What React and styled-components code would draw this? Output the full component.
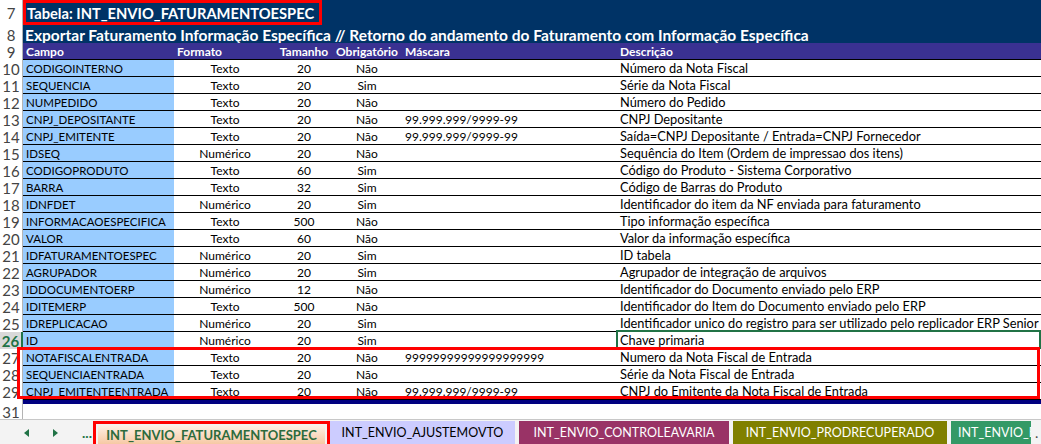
import React from "react";
import styled, { createGlobalStyle } from "styled-components";

const GlobalStyle = createGlobalStyle`
  body {
    margin: 0;
    background: #fff;
    font-family: Lato, "Open Sans", sans-serif;
  }
`;

const COLS = "23px 151px 102px 56px 70px 215px 1fr";

const Sheet = styled.div`
  width: 1041px;
  height: 444px;
  overflow: hidden;
  display: flex;
  flex-direction: column;
  background: #fff;
`;

const Row = styled.div`
  display: grid;
  grid-template-columns: ${COLS};
  height: ${({ h }) => h}px;
  flex: none;
`;

const RowHead = styled.div`
  display: flex;
  align-items: center;
  justify-content: center;
  font-size: 15px;
  overflow: hidden;
  color: ${({ sel }) => (sel ? "#217346" : "#444")};
  font-weight: ${({ sel }) => (sel ? 700 : 400)};
  background: ${({ sel }) => (sel ? "#d9d9d9" : "#fff")};
  border-right: ${({ sel }) => (sel ? "2px solid #217346" : "1px solid #b4b4b4")};
`;

const TitleCell = styled.div`
  grid-column: 2 / -1;
  background: #003366;
  color: #fff;
  font-weight: 700;
  font-size: ${({ size }) => size}px;
  display: flex;
  align-items: center;
  white-space: nowrap;
  padding-left: ${({ pad }) => pad || 0}px;
`;

const TitleBox = styled.span`
  box-sizing: border-box;
  width: 299px;
  height: 25px;
  border: 3px solid #ff0000;
  display: flex;
  align-items: center;
  padding-left: 1px;
  align-self: flex-start;
`;

const HeadCell = styled.div`
  background: #3a3192;
  color: #fff;
  font-weight: 700;
  font-size: 12px;
  white-space: nowrap;
  padding: 0 3px;
  display: flex;
  align-items: center;
  justify-content: ${({ center }) => (center ? "center" : "flex-start")};
  border-bottom: 1px solid #000;
  box-sizing: border-box;
`;

const Cell = styled.div`
  position: relative;
  box-sizing: border-box;
  font-size: ${({ size }) => size || 12}px;
  color: #000;
  white-space: nowrap;
  padding: 0 3px;
  display: flex;
  align-items: center;
  justify-content: ${({ center }) => (center ? "center" : "flex-start")};
  background: ${({ blue }) => (blue ? "#99ccff" : "#fff")};
  border-bottom: 1px solid #000;
`;

const Selection = styled.div`
  position: absolute;
  left: -1px;
  right: 0;
  top: -2px;
  bottom: -1px;
  border: 2px solid #217346;
  pointer-events: none;
`;

const Marked = styled.div`
  position: relative;
  flex: none;
  &::after {
    content: "";
    position: absolute;
    left: 17px;
    right: 1px;
    top: -2px;
    bottom: 1px;
    border: 3px solid #ff0000;
    pointer-events: none;
  }
`;

const Band = styled.div`
  grid-column: 2 / -1;
  background: #000080;
`;

const Empty = styled.div`
  grid-column: 2 / -1;
`;

const TabBar = styled.div`
  flex: 1;
  display: flex;
  align-items: stretch;
  background: #f3f3f3;
  border-top: 1px solid #c8c8c8;
  padding-top: 1px;
`;

const Nav = styled.div`
  width: 93px;
  flex: none;
  display: flex;
  align-items: center;
  padding-left: 24px;
  box-sizing: border-box;
  gap: 24px;
  color: #217346;
  font-weight: 700;
  font-size: 14px;
`;

const ActiveFrame = styled.div`
  box-sizing: border-box;
  width: 237px;
  flex: none;
  border: 3px solid #ff0000;
  border-bottom: none;
  padding: 1px 2px 0;
  display: flex;
`;

const Tab = styled.div`
  flex: none;
  box-sizing: border-box;
  width: ${({ w }) => w}px;
  display: flex;
  align-items: center;
  justify-content: ${({ start }) => (start ? "flex-start" : "center")};
  padding-left: ${({ start }) => (start ? 7 : 0)}px;
  font-size: ${({ active }) => (active ? 13 : 12.5)}px;
  white-space: nowrap;
  overflow: hidden;
  color: ${({ fg }) => fg};
  background: ${({ bg }) => bg};
  font-weight: ${({ active }) => (active ? 700 : 400)};
  margin-left: ${({ ml }) => ml || 0}px;
`;

const More = styled.div`
  font-size: 14px;
  color: #444;
  padding-left: 4px;
  display: flex;
  align-items: center;
`;

const rows = [
  [10, "CODIGOINTERNO", "Texto", "20", "Não", "", "Número da Nota Fiscal"],
  [11, "SEQUENCIA", "Texto", "20", "Sim", "", "Série da Nota Fiscal"],
  [12, "NUMPEDIDO", "Texto", "20", "Não", "", "Número do Pedido"],
  [13, "CNPJ_DEPOSITANTE", "Texto", "20", "Não", "99.999.999/9999-99", "CNPJ Depositante"],
  [14, "CNPJ_EMITENTE", "Texto", "20", "Não", "99.999.999/9999-99", "Saída=CNPJ Depositante / Entrada=CNPJ Fornecedor"],
  [15, "IDSEQ", "Numérico", "20", "Não", "", "Sequência do Item (Ordem de impressao dos itens)"],
  [16, "CODIGOPRODUTO", "Texto", "60", "Sim", "", "Código do Produto - Sistema Corporativo"],
  [17, "BARRA", "Texto", "32", "Sim", "", "Código de Barras do Produto"],
  [18, "IDNFDET", "Numérico", "20", "Sim", "", "Identificador do item da NF enviada para faturamento"],
  [19, "INFORMACAOESPECIFICA", "Texto", "500", "Não", "", "Tipo informação específica"],
  [20, "VALOR", "Texto", "60", "Não", "", "Valor da informação específica"],
  [21, "IDFATURAMENTOESPEC", "Numérico", "20", "Sim", "", "ID tabela"],
  [22, "AGRUPADOR", "Numérico", "20", "Sim", "", "Agrupador de integração de arquivos"],
  [23, "IDDOCUMENTOERP", "Numérico", "12", "Não", "", "Identificador do Documento enviado pelo ERP"],
  [24, "IDITEMERP", "Texto", "500", "Não", "", "Identificador do Item do Documento enviado pelo ERP"],
  [25, "IDREPLICACAO", "Numérico", "20", "Sim", "", "Identificador unico do registro para ser utilizado pelo replicador ERP Senior"],
  [26, "ID", "Numérico", "20", "Sim", "", "Chave primaria"],
];

const marked = [
  [27, "NOTAFISCALENTRADA", "Texto", "20", "Não", "99999999999999999999", "Numero da Nota Fiscal de Entrada"],
  [28, "SEQUENCIAENTRADA", "Texto", "20", "Não", "", "Série da Nota Fiscal de Entrada"],
  [29, "CNPJ_EMITENTEENTRADA", "Texto", "20", "Não", "99.999.999/9999-99", "CNPJ do Emitente da Nota Fiscal de Entrada"],
];

const DataRow = ({ r }) => {
  const sel = r[0] === 26;
  return (
    <Row h={17}>
      <RowHead sel={sel}>{r[0]}</RowHead>
      <Cell blue size={11.5}>{r[1]}</Cell>
      <Cell center>{r[2]}</Cell>
      <Cell center>{r[3]}</Cell>
      <Cell center>{r[4]}</Cell>
      <Cell>{r[5]}</Cell>
      <Cell size={12.8}>
        {r[6]}
        {sel && <Selection />}
      </Cell>
    </Row>
  );
};

const Arrow = ({ left }) => (
  <svg width="5" height="8" viewBox="0 0 5 8">
    <path d={left ? "M5 0 L0 4 L5 8 Z" : "M0 0 L5 4 L0 8 Z"} fill="#217346" />
  </svg>
);

const App = () => (
  <Sheet>
    <GlobalStyle />
    <Row h={26}>
      <RowHead>7</RowHead>
      <TitleCell size={14.7}>
        <TitleBox>Tabela: INT_ENVIO_FATURAMENTOESPEC</TitleBox>
      </TitleCell>
    </Row>
    <Row h={17}>
      <RowHead>8</RowHead>
      <TitleCell size={15.5} pad={2}>
        Exportar Faturamento Informação Específica // Retorno do andamento do Faturamento com Informação Específica
      </TitleCell>
    </Row>
    <Row h={17}>
      <RowHead>9</RowHead>
      <HeadCell>Campo</HeadCell>
      <HeadCell>Formato</HeadCell>
      <HeadCell center>Tamanho</HeadCell>
      <HeadCell center>Obrigatório</HeadCell>
      <HeadCell>Máscara</HeadCell>
      <HeadCell>Descrição</HeadCell>
    </Row>
    {rows.map((r) => (
      <DataRow key={r[0]} r={r} />
    ))}
    <Marked>
      {marked.map((r) => (
        <DataRow key={r[0]} r={r} />
      ))}
    </Marked>
    <Row h={4}>
      <RowHead />
      <Band />
    </Row>
    <Row h={15}>
      <RowHead>31</RowHead>
      <Empty />
    </Row>
    <TabBar>
      <Nav>
        <Arrow left />
        <Arrow />
        <span>...</span>
      </Nav>
      <ActiveFrame>
        <Tab w={227} active fg="#2d6b3c" bg="linear-gradient(#fdf1e7, #f7c9a4)">
          INT_ENVIO_FATURAMENTOESPEC
        </Tab>
      </ActiveFrame>
      <Tab w={185} fg="#000" bg="#ccccff">INT_ENVIO_AJUSTEMOVTO</Tab>
      <Tab w={210} ml={4} fg="#fff" bg="#993366">INT_ENVIO_CONTROLEAVARIA</Tab>
      <Tab w={214} ml={4} fg="#fff" bg="#808000">INT_ENVIO_PRODRECUPERADO</Tab>
      <Tab w={80} ml={4} start fg="#fff" bg="#339966">INT_ENVIO_E</Tab>
      <More>.</More>
    </TabBar>
  </Sheet>
);

export default App;
